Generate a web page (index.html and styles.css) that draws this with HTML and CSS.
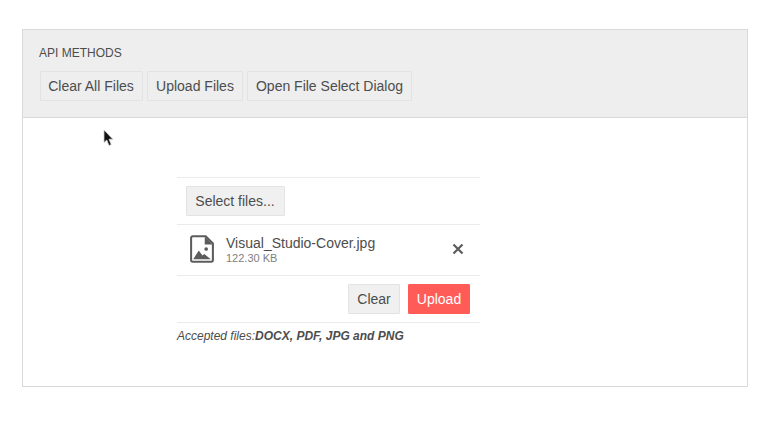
FILE: index.html
```html
<!DOCTYPE html>
<html lang="en">
<head>
<meta charset="utf-8">
<title>Upload API methods</title>
<link rel="stylesheet" href="styles.css">
</head>
<body>
<div class="panel">
  <div class="config">
    <div class="config-title">API METHODS</div>
    <div class="methods">
      <button class="btn method clear-all">Clear All Files</button>
      <button class="btn method upload-files">Upload Files</button>
      <button class="btn method open-dialog">Open File Select Dialog</button>
    </div>
  </div>
  <div class="demo">
    <div class="upload">
      <div class="select-row"><button class="btn select">Select files...</button></div>
      <div class="file-row">
        <svg class="file-icon" viewBox="0 0 26 30" width="24" height="28" aria-hidden="true">
          <path d="M3 1.2H17L24.8 9V27a1.8 1.8 0 0 1-1.8 1.8H3A1.8 1.8 0 0 1 1.2 27V3A1.8 1.8 0 0 1 3 1.2Z" fill="none" stroke="#5c5c5c" stroke-width="2.2"/>
          <path d="M16 1.5V10H24.5Z" fill="#5c5c5c"/>
          <circle cx="17.5" cy="15" r="2" fill="#5c5c5c"/>
          <path d="M3.5 26 9.5 16.5 13.5 22 15.5 20.5 22.5 26Z" fill="#5c5c5c"/>
        </svg>
        <div class="file-info">
          <div class="file-name">Visual_Studio-Cover.jpg</div>
          <div class="file-size">122.30 KB</div>
        </div>
        <svg class="remove" viewBox="0 0 12 12" width="12" height="12" aria-hidden="true">
          <path d="M1.5 1.5 10.5 10.5M10.5 1.5 1.5 10.5" stroke="#5c5c5c" stroke-width="2.2" fill="none"/>
        </svg>
      </div>
      <div class="actions">
        <button class="btn clear">Clear</button>
        <button class="btn primary">Upload</button>
      </div>
      <p class="hint">Accepted files:<strong>DOCX, PDF, JPG and PNG</strong></p>
    </div>
  </div>
</div>
<svg class="cursor" viewBox="0 0 12 18" width="12" height="18" aria-hidden="true">
  <path d="M1 1V13.5L3.8 11 6 16.5 8.2 15.5 6 10.2H9.8Z" fill="#111" stroke="#ccc" stroke-width=".8"/>
</svg>
</body>
</html>
```
FILE: styles.css
```css
* { box-sizing: border-box; }
html, body { margin: 0; height: 100%; background: #fff; }
body {
  padding: 29px 22px 0;
  font-family: "Liberation Sans", Arial, sans-serif;
  color: #4d4d4d;
  position: relative;
  overflow: hidden;
}
.panel {
  width: 726px;
  height: 358px;
  border: 1px solid #d9d9d9;
  background: #fff;
}
.config {
  height: 88px;
  background: #eee;
  border-bottom: 1px solid #d9d9d9;
  padding: 16px 16px 0;
}
.config-title {
  font-size: 12px;
  line-height: 14px;
  color: #4d4d4d;
}
.methods {
  display: flex;
  gap: 4px;
  margin-top: 11px;
  margin-left: 1px;
}
.btn {
  font-family: inherit;
  font-size: 14px;
  line-height: 16px;
  height: 30px;
  margin: 0;
  padding: 0;
  color: #4d4d4d;
  background: #f0f0f0;
  border: 1px solid #e3e3e3;
  border-radius: 1px;
  display: block;
}
.method { background: #eee; }
.clear-all { width: 103px; padding-right: 1px; }
.upload-files { width: 96px; }
.open-dialog { width: 165px; }
.demo {
  padding: 59px 0 0 154px;
}
.upload {
  width: 303px;
}
.select-row {
  border-top: 1px solid #ebebeb;
  padding: 8px 9px;
  height: 47px;
}
.select { width: 99px; padding-right: 1px; }
.file-row {
  border-top: 1px solid #ebebeb;
  height: 51px;
  display: flex;
  align-items: center;
  padding: 0 16px 2px 13px;
}
.file-icon { flex: none; }
.file-info {
  flex: 1;
  margin-left: 12px;
  padding-top: 2px;
}
.file-name { font-size: 14px; line-height: 16px; color: #4d4d4d; }
.file-size { font-size: 11px; line-height: 13px; margin-top: 1px; color: #808080; }
.remove { flex: none; }
.actions {
  border-top: 1px solid #ebebeb;
  border-bottom: 1px solid #ebebeb;
  height: 48px;
  display: flex;
  justify-content: flex-end;
  align-items: center;
  gap: 8px;
  padding-right: 10px;
}
.clear { width: 52px; }
.primary {
  width: 62px;
  background: #ff5c57;
  border-color: #ff5c57;
  color: #fff;
}
.hint {
  margin: 6px 0 0;
  font-size: 12px;
  line-height: 14px;
  font-style: italic;
  color: #4d4d4d;
}
.cursor {
  position: absolute;
  left: 103px;
  top: 129px;
}
```
